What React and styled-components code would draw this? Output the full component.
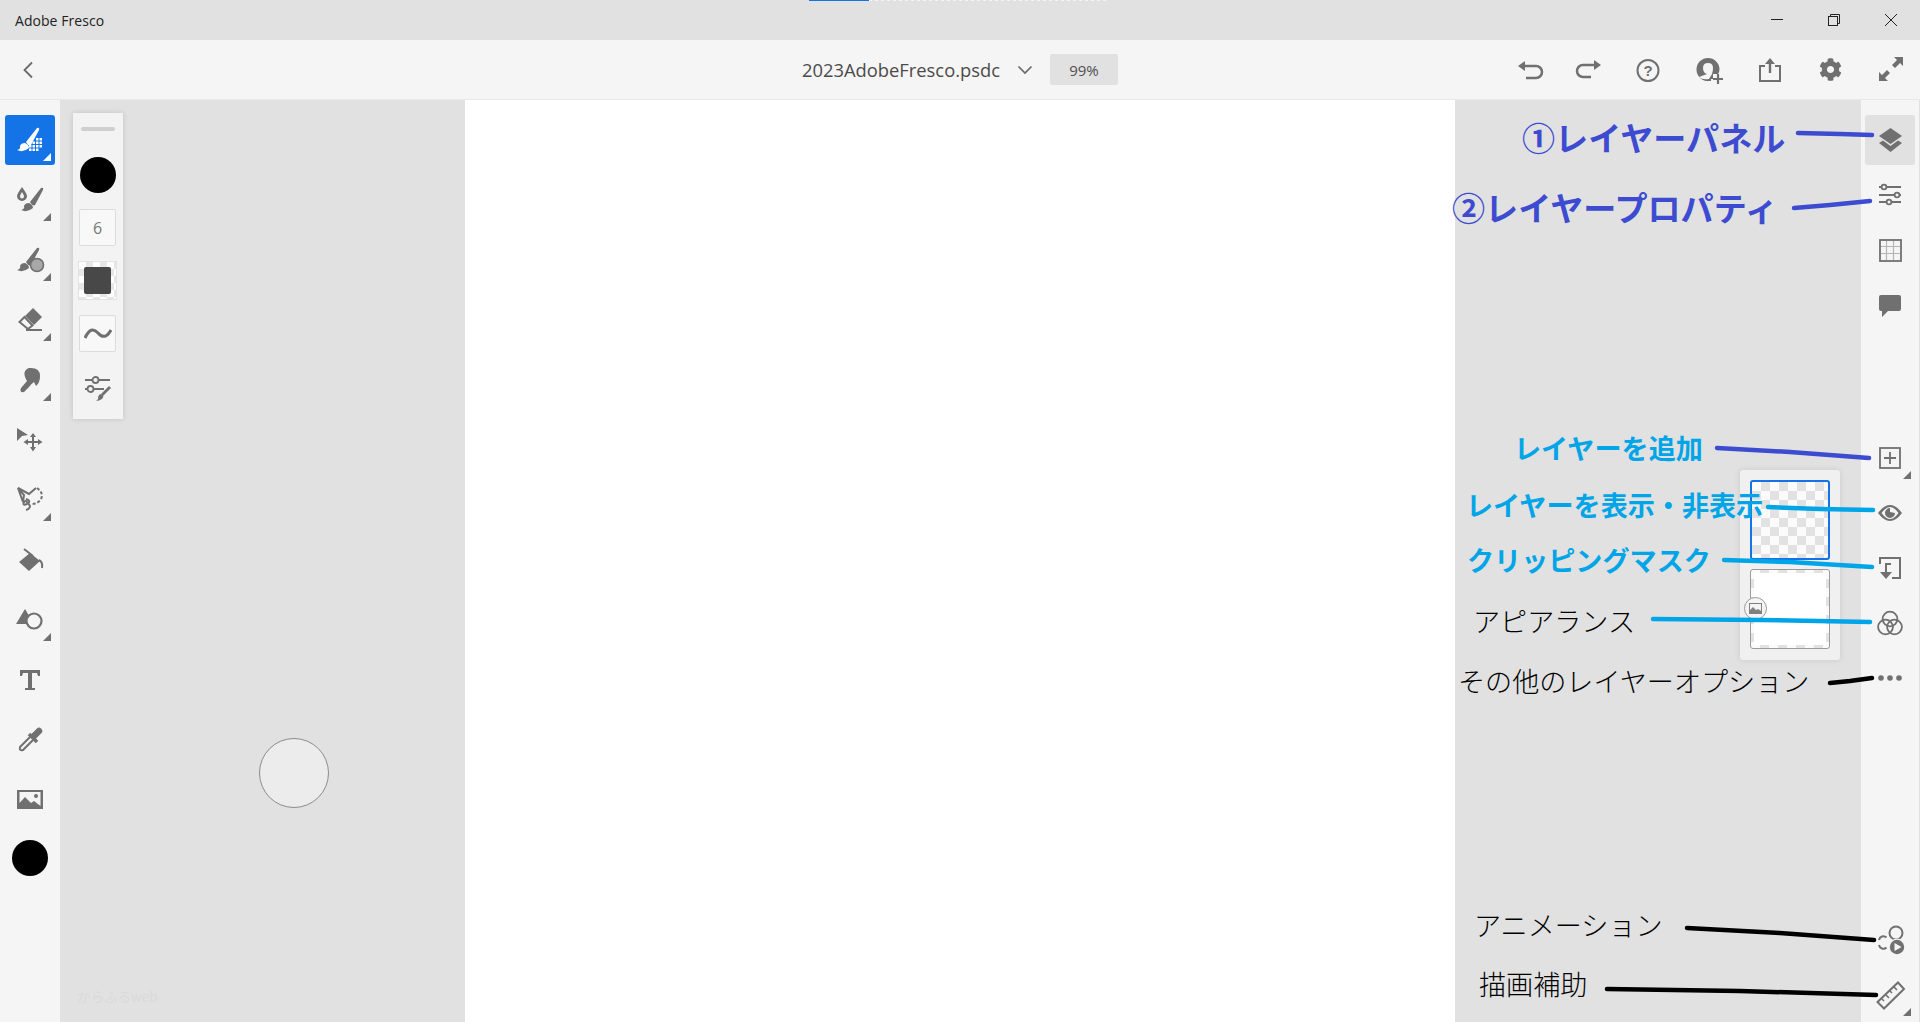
import React from "react";
import styled, { createGlobalStyle } from "styled-components";
import { FaCog } from "react-icons/fa";

const GREY = "#707070";
const INDIGO = "#3d4bd1";
const CYAN = "#00a5e8";

const Global = createGlobalStyle`
  html, body {
    margin: 0;
    padding: 0;
    overflow: hidden;
    background: #e1e1e1;
    font-family: "Open Sans", "Noto Sans", sans-serif;
  }
`;

const Page = styled.div`
  position: relative;
  display: flex;
  flex-direction: column;
  width: 1920px;
  height: 1022px;
  overflow: hidden;
`;

const TitleBar = styled.div`
  position: relative;
  display: flex;
  align-items: center;
  justify-content: space-between;
  height: 40px;
  flex: none;
  padding-left: 15px;
  background: #e1e1e1;
`;

const AppName = styled.span`
  font-size: 14px;
  letter-spacing: 0.05px;
  color: #222;
`;

const Progress = styled.div`
  position: absolute;
  top: 0;
  left: 809px;
  width: 299px;
  height: 1px;
  background:
    linear-gradient(#1473e6, #1473e6) 0 0 / 60px 1px no-repeat,
    repeating-linear-gradient(90deg, #f4f4f4 0 3px, transparent 3px 6px);
`;

const WindowButtons = styled.div`
  display: flex;
  margin-right: 1px;
`;

const WindowButton = styled.div`
  display: flex;
  align-items: center;
  justify-content: center;
  width: 57px;
  height: 40px;
`;

const TopBar = styled.div`
  position: relative;
  display: flex;
  align-items: center;
  justify-content: space-between;
  flex: none;
  box-sizing: border-box;
  height: 60px;
  background: #f5f5f5;
  border-bottom: 1px solid #e8e8e8;
`;

const BackButton = styled.div`
  display: flex;
  align-items: center;
  justify-content: center;
  width: 56px;
  height: 60px;
`;

const DocInfo = styled.div`
  display: flex;
  align-items: center;
  margin-left: 746px;
`;

const DocName = styled.span`
  font-size: 18.35px;
  color: #4b4b4b;
`;

const Chevron = styled.svg`
  margin: 0 17px 0 17px;
`;

const Zoom = styled.div`
  display: flex;
  align-items: center;
  justify-content: center;
  width: 68px;
  height: 31px;
  border-radius: 2px;
  background: #e1e1e1;
  color: #505050;
  font-size: 15px;
`;

const TopActions = styled.div`
  display: flex;
  margin-left: auto;
`;

const TopAction = styled.div`
  display: flex;
  align-items: center;
  justify-content: center;
  width: 60px;
  height: 60px;
  color: ${GREY};
`;

const Main = styled.div`
  display: flex;
  flex: 1;
  min-height: 0;
`;

const Rail = styled.div`
  display: flex;
  flex-direction: column;
  flex: none;
  box-sizing: border-box;
  width: 60px;
  padding: 15px 5px 0;
  gap: 10px;
  background: #f5f5f5;
`;

const RightRail = styled.div`
  display: flex;
  flex-direction: column;
  flex: none;
  box-sizing: border-box;
  width: 58px;
  margin-right: 1px;
  padding: 15px 4px 2px;
  background: #f5f5f5;
`;

const RailGroup = styled.div`
  display: flex;
  flex-direction: column;
  gap: 5px;
  margin-top: ${(p) => p.$top || "0"};
`;

const ToolButton = styled.div`
  position: relative;
  flex: none;
  width: 50px;
  height: 50px;
  border-radius: 3px;
  background: ${(p) => (p.$active ? "#1473e6" : p.$selected ? "#e1e1e1" : "transparent")};
  color: ${(p) => (p.$active ? "#fff" : GREY)};

  svg {
    display: block;
  }

  ${(p) =>
    p.$corner &&
    `&::after {
      content: "";
      position: absolute;
      right: 4px;
      bottom: 4px;
      width: 8px;
      height: 8px;
      background: currentColor;
      clip-path: polygon(100% 0, 100% 100%, 0 100%);
    }`}
`;

const ColorDot = styled.div`
  flex: none;
  width: 36px;
  height: 36px;
  margin: ${(p) => p.$margin || "0"};
  border-radius: 50%;
  background: #000;
`;

const Workspace = styled.div`
  position: relative;
  display: flex;
  flex: 1;
  background: #e1e1e1;
`;

const Gutter = styled.div`
  flex: none;
  width: 405px;
  box-sizing: border-box;
  padding: 13px 0 0 13px;
`;

const FloatPanel = styled.div`
  display: flex;
  flex-direction: column;
  align-items: center;
  box-sizing: border-box;
  width: 50px;
  height: 306px;
  padding: 14px 1px 0 0;
  background: #f3f3f3;
  box-shadow: 0 0 5px rgba(0, 0, 0, 0.14);
`;

const Handle = styled.div`
  width: 34px;
  height: 4px;
  border-radius: 2px;
  background: #cfcfcf;
  margin-bottom: 26px;
`;

const PanelBox = styled.div`
  display: flex;
  align-items: center;
  justify-content: center;
  box-sizing: border-box;
  width: 37px;
  height: 37px;
  margin-top: ${(p) => p.$top};
  border: 1px solid #dcdcdc;
  border-radius: 2px;
  background: #f8f8f8;
  color: #777;
  font-size: 16px;
`;

const OpacityBox = styled.div`
  display: flex;
  align-items: center;
  justify-content: center;
  box-sizing: border-box;
  width: 39px;
  height: 39px;
  margin-top: 15px;
  border: 1px solid #e2e2e2;
  background: repeating-conic-gradient(#e6e6e6 0 25%, #fdfdfd 0 50%) 0 0 / 14px 14px;
`;

const OpacityFill = styled.div`
  width: 27px;
  height: 27px;
  border-radius: 2px;
  background: #484848;
`;

const PanelIcon = styled.svg`
  margin-top: ${(p) => p.$top};
`;

const Canvas = styled.div`
  flex: none;
  width: 990px;
  background: #fff;
`;

const BrushCursor = styled.div`
  position: absolute;
  left: 199px;
  top: 638px;
  box-sizing: border-box;
  width: 70px;
  height: 70px;
  border: 1px solid #8c8c8c;
  border-radius: 50%;
  background: #ececec;
`;

const Watermark = styled.span`
  position: absolute;
  left: 17px;
  top: 886px;
  font-family: "Noto Sans CJK JP", "Noto Sans", sans-serif;
  font-size: 13.5px;
  color: #d9dadb;
`;

const LayerStack = styled.div`
  position: absolute;
  right: 0;
  top: 370px;
  display: flex;
  flex-direction: column;
  gap: 9px;
  box-sizing: border-box;
  width: 100px;
  height: 190px;
  margin-right: 21px;
  padding: 10px 10px;
  border-radius: 3px;
  background: #f0f0f0;
  box-shadow: 0 0 6px rgba(0, 0, 0, 0.1);
`;

const LayerThumb = styled.div`
  position: relative;
  box-sizing: border-box;
  width: 80px;
  height: 80px;
  border: ${(p) => (p.$current ? "2px solid #1473e6" : "1px solid #9a9a9a")};
  border-radius: 3px;
  background: repeating-conic-gradient(#e2e2e2 0 25%, #fbfbfb 0 50%) 0 0 / 18px 18px;
`;

const ThumbFill = styled.div`
  width: calc(100% - 6px);
  height: calc(100% - 6px);
  margin: 3px;
  background: #fff;
`;

const LayerBadge = styled.div`
  position: absolute;
  left: -7px;
  top: 27px;
  display: flex;
  align-items: center;
  justify-content: center;
  box-sizing: border-box;
  width: 23px;
  height: 23px;
  border: 1px solid #9a9a9a;
  border-radius: 50%;
  background: #f4f4f4;
`;

const Lines = styled.svg`
  position: absolute;
  left: 0;
  top: 0;
  pointer-events: none;
`;

const Note = styled.span`
  position: absolute;
  left: ${(p) => p.$x}px;
  top: ${(p) => p.$y}px;
  font-family: "Noto Sans CJK JP", "Noto Sans", sans-serif;
  font-size: ${(p) => p.$size || 27.1}px;
  font-weight: ${(p) => (p.$light ? 300 : 700)};
  line-height: 1;
  white-space: nowrap;
  color: ${(p) => p.$color};
`;

const Glyph = ({ children, size = 50 }) => (
  <svg width={size} height={size} viewBox={`0 0 ${size} ${size}`} fill="currentColor" stroke="none">
    {children}
  </svg>
);

const Stroke = (props) => <g fill="none" stroke="currentColor" strokeWidth="2.4" {...props} />;

const brushPath = "M21 27 L32 13 Q35 12 34 15 L26 30 Q24 32 21 27 Z M20 28 Q24 30 24 33 Q18 38 12 35 Q16 34 15 31 Q16 28 20 28 Z";

const PixelDots = () => {
  const dots = [];
  for (let r = 0; r < 4; r++) {
    for (let c = 0; c < 4; c++) {
      if (r + c >= 2 && !(r === 3 && c === 3)) {
        dots.push(<rect key={`${r}-${c}`} x={24 + c * 3.5} y={23 + r * 3.5} width="2.5" height="2.5" />);
      }
    }
  }
  return <g>{dots}</g>;
};

const leftTools = [
  {
    active: true,
    corner: true,
    icon: (
      <>
        <path d={brushPath} />
        <PixelDots />
      </>
    ),
  },
  {
    corner: true,
    icon: (
      <>
        <path d="M17 12 Q22 19 22 21 A5 5 0 0 1 12 21 Q12 19 17 12 Z M17 17 Q15 20 15 21.5 A2 2 0 0 0 19 21.5 Q19 20 17 17 Z" fillRule="evenodd" />
        <path transform="translate(4 0)" d={brushPath} />
      </>
    ),
  },
  {
    corner: true,
    icon: (
      <>
        <path d={brushPath} />
        <circle cx="32" cy="30" r="6.5" fill="#a8a8a8" stroke="currentColor" strokeWidth="1.6" />
      </>
    ),
  },
  {
    corner: true,
    icon: (
      <>
        <path d="M28 13 L37 22 L29 30 L20 21 Z" />
        <path d="M19.5 22 L27.5 30.5 L23 34 L14.5 27 Z" fill="none" stroke="currentColor" strokeWidth="2" />
        <rect x="21" y="34" width="16" height="2" />
      </>
    ),
  },
  {
    corner: true,
    icon: <path d="M24 13 Q35 12 35 21 Q35 28 31 31 L29 27 Q26 29 24 32 L19 37 Q14 38 16 33 L22 26 Q16 16 24 13 Z" />,
  },
  {
    icon: (
      <>
        <path d="M12 13 L23 20 L17 21 L12 26 Z" />
        <path d="M28 18 L31 22 H29 V26 H33 V24 L37.5 27 L33 30 V28 H29 V32 H31 L28 36.5 L25 32 H27 V28 H23 V30 L18.5 27 L23 24 V26 H27 V22 H25 Z" />
      </>
    ),
  },
  {
    corner: true,
    icon: (
      <>
        <Stroke strokeWidth="2">
          <path d="M13 13 L18 27 L19 20 Z" />
          <path d="M13 13 L24 19 L31 13" />
          <path d="M32 13 Q39 18 36 24 Q33 29 26 29" strokeDasharray="3 2" />
          <path d="M21 24 Q27 26 22 29 Q17 31 19 27 Q21 24 25 31 Q25 34 21 35" />
        </Stroke>
      </>
    ),
  },
  {
    icon: (
      <>
        <path d="M14 27 L25 18 L35 26 L24 36 Z" />
        <path d="M19 14 L28 21" fill="none" stroke="currentColor" strokeWidth="2" />
        <path d="M34 25 Q38 27 37 33" fill="none" stroke="currentColor" strokeWidth="2" />
      </>
    ),
  },
  {
    corner: true,
    icon: (
      <>
        <path d="M20 14 L29 29 H11 Z" />
        <circle cx="29" cy="26" r="7.5" fill="#f5f5f5" stroke="currentColor" strokeWidth="2.2" />
      </>
    ),
  },
  {
    icon: <path d="M15 15 H35 V21 H33 L32 18 H27 V33 H30 V35 H20 V33 H23 V18 H18 L17 21 H15 Z" />,
  },
  {
    icon: (
      <>
        <path d="M29 21 L34 16" fill="none" stroke="currentColor" strokeWidth="6.5" strokeLinecap="round" />
        <path d="M24 19 L32 27" fill="none" stroke="currentColor" strokeWidth="3.5" />
        <path d="M25 22 L15 32 Q14 36 18 35 L28 25" fill="none" stroke="currentColor" strokeWidth="2" />
      </>
    ),
  },
  {
    icon: (
      <>
        <path d="M12 15 H38 V34 H12 Z M14.5 17 V28 L20 22 L26 28 L29 26 L35.5 31 V17 Z" fillRule="evenodd" />
        <circle cx="31" cy="21" r="2" />
      </>
    ),
  },
];

const railTop = [
  {
    selected: true,
    icon: (
      <>
        <path d="M25.5 13 L37 21 L25.5 29 L14 21 Z" />
        <path d="M14 28 L18 25.5 L25.5 31 L33 25.5 L37 28 L25.5 37 Z" />
      </>
    ),
  },
  {
    icon: (
      <Stroke strokeWidth="1.8">
        <path d="M14 17 H17 M21 17 H36 M14 25 H29 M34 25 H36 M14 32 H21 M26 32 H36" />
        <circle cx="19" cy="17" r="2.4" />
        <circle cx="32" cy="25" r="2.4" />
        <circle cx="24" cy="32" r="2.4" />
      </Stroke>
    ),
  },
  {
    icon: (
      <>
        <path d="M21.5 15 V35 M28.5 15 V35 M15 21.5 H35 M15 28.5 H35" stroke="#b5b5b5" strokeWidth="1.2" fill="none" />
        <rect x="15" y="15" width="21" height="21" fill="none" stroke="currentColor" strokeWidth="1.8" />
      </>
    ),
  },
  {
    icon: <path d="M16 15 H34 Q36 15 36 17 V29 Q36 31 34 31 H23 L17 37 V31 H16 Q14 31 14 29 V17 Q14 15 16 15 Z" />,
  },
];

const railMiddle = [
  {
    corner: true,
    icon: (
      <Stroke strokeWidth="1.8">
        <rect x="15" y="15" width="20" height="20" />
        <path d="M25 19 V31 M19 25 H31" />
      </Stroke>
    ),
  },
  {
    icon: (
      <>
        <path d="M13 25 Q25 9 37 25 Q25 41 13 25 Z M16.5 25 Q25 37 33.5 25 Q25 13 16.5 25 Z" fillRule="evenodd" />
        <path d="M25 20 A5 5 0 1 0 30 25 L25 24 Z" />
      </>
    ),
  },
  {
    icon: (
      <>
        <Stroke strokeWidth="2">
          <path d="M15 21 V15 H35 V35 H27" />
          <path d="M26 21 H21 V31" />
        </Stroke>
        <path d="M15 29 H27 L21 36 Z" />
      </>
    ),
  },
  {
    icon: (
      <Stroke strokeWidth="1.8">
        <circle cx="25" cy="21" r="7.4" />
        <circle cx="20.5" cy="29" r="7.4" />
        <circle cx="29.5" cy="29" r="7.4" />
      </Stroke>
    ),
  },
  {
    icon: (
      <>
        <circle cx="16" cy="25" r="2.8" />
        <circle cx="25" cy="25" r="2.8" />
        <circle cx="34" cy="25" r="2.8" />
      </>
    ),
  },
];

const railBottom = [
  {
    icon: (
      <>
        <Stroke strokeWidth="2">
          <circle cx="31" cy="18" r="6.5" />
          <path d="M21.5 22.5 A4.5 4.5 0 0 0 14 25" />
          <path d="M14 30 A4.5 4.5 0 0 0 21.5 32.5" />
        </Stroke>
        <circle cx="32" cy="32" r="8.6" fill="#f5f5f5" />
        <circle cx="32" cy="32" r="7.2" />
        <path d="M29.5 28 V36 L36.5 32 Z" fill="#f5f5f5" />
      </>
    ),
  },
  {
    corner: true,
    icon: (
      <Stroke strokeWidth="2">
        <path d="M33 12.5 L39 19 L19 38.5 L12.5 32 Z" />
        <path d="M29 17 L32 20 M25 21 L27 23 M21 25 L24 28 M17 29 L19 31" strokeWidth="1.6" />
      </Stroke>
    ),
  },
];

const annotationLines = [
  { d: "M1798 133 L1840 134 L1872 135", c: INDIGO },
  { d: "M1794 208 L1830 205 L1870 201", c: INDIGO },
  { d: "M1717 448 L1790 452 L1869 458", c: INDIGO },
  { d: "M1768 507 L1820 509 L1873 510", c: CYAN },
  { d: "M1724 560 L1790 562 L1872 567", c: CYAN },
  { d: "M1653 619 L1760 620 L1870 622", c: CYAN },
  { d: "M1830 683 L1850 681 L1872 678", c: "#000" },
  { d: "M1687 928 L1780 933 L1874 940", c: "#000" },
  { d: "M1607 989 L1740 991 L1876 995", c: "#000" },
];

const notes = [
  { text: "①レイヤーパネル", x: 1522, y: 121, size: 33.1, color: INDIGO },
  { text: "②レイヤープロパティ", x: 1452, y: 191, size: 33.1, color: INDIGO },
  { text: "レイヤーを追加", x: 1514, y: 434, color: CYAN },
  { text: "レイヤーを表示・非表示", x: 1466, y: 491, color: CYAN },
  { text: "クリッピングマスク", x: 1467, y: 546, color: CYAN },
  { text: "アピアランス", x: 1473, y: 607, color: "#000", light: true },
  { text: "その他のレイヤーオプション", x: 1458, y: 667, color: "#000", light: true },
  { text: "アニメーション", x: 1474, y: 911, color: "#000", light: true },
  { text: "描画補助", x: 1479, y: 970, color: "#000", light: true },
];

const RailButtons = ({ items }) =>
  items.map((t, i) => (
    <ToolButton key={i} $active={t.active} $selected={t.selected} $corner={t.corner}>
      <Glyph>{t.icon}</Glyph>
    </ToolButton>
  ));

const App = () => (
  <Page>
    <Global />
    <TitleBar>
      <AppName>Adobe Fresco</AppName>
      <Progress />
      <WindowButtons>
        <WindowButton>
          <svg width="14" height="14" viewBox="0 0 14 14" fill="none" stroke="#222">
            <path d="M1 6.5 H13" />
          </svg>
        </WindowButton>
        <WindowButton>
          <svg width="14" height="14" viewBox="0 0 14 14" fill="none" stroke="#222">
            <rect x="1.5" y="3.5" width="9" height="9" />
            <path d="M3.5 3.5 V1.5 H12.5 V10.5 H10.5" />
          </svg>
        </WindowButton>
        <WindowButton>
          <svg width="14" height="14" viewBox="0 0 14 14" fill="none" stroke="#222">
            <path d="M1 1 L13 13 M13 1 L1 13" />
          </svg>
        </WindowButton>
      </WindowButtons>
    </TitleBar>

    <TopBar>
      <BackButton>
        <svg width="14" height="20" viewBox="0 0 14 20" fill="none" stroke="#6a6a6a" strokeWidth="1.8">
          <path d="M11 2.5 L3.5 10 L11 17.5" />
        </svg>
      </BackButton>
      <DocInfo>
        <DocName>2023AdobeFresco.psdc</DocName>
        <Chevron width="16" height="10" viewBox="0 0 16 10" fill="none" stroke="#6a6a6a" strokeWidth="1.7">
          <path d="M1.5 1.5 L8 8 L14.5 1.5" />
        </Chevron>
        <Zoom>99%</Zoom>
      </DocInfo>
      <TopActions>
        <TopAction>
          <Glyph size={30}>
            <path d="M3 11 L10 6 V16 Z" />
            <path d="M9 11 H21 A6 6 0 0 1 21 23 H11" fill="none" stroke="currentColor" strokeWidth="2.5" />
          </Glyph>
        </TopAction>
        <TopAction>
          <Glyph size={30}>
            <path d="M26 10 L19 5 V15 Z" />
            <path d="M20 10 H8 A6 6 0 0 0 8 22 H16" fill="none" stroke="currentColor" strokeWidth="2.5" />
          </Glyph>
        </TopAction>
        <TopAction>
          <Glyph size={30}>
            <circle cx="13" cy="15.5" r="10.5" fill="none" stroke="currentColor" strokeWidth="2" />
            <text x="13" y="21" textAnchor="middle" fontFamily="Liberation Sans, sans-serif" fontWeight="700" fontSize="15">
              ?
            </text>
          </Glyph>
        </TopAction>
        <TopAction>
          <Glyph size={30}>
            <path d="M13 3 A11.5 11.5 0 0 1 24.5 14 Q24.5 17 23 19 H18 V24 H16 V26 H13 A11.5 11.5 0 0 1 13 3 Z M13 8 Q8 8 8 13 Q8 18 12 19 L4 22 Q7 25 14 24 L17 19 Q18 16 18 13 Q18 8 13 8 Z" fillRule="evenodd" />
            <path d="M23 19 V29 M18 24 H28" fill="none" stroke="currentColor" strokeWidth="2.2" />
          </Glyph>
        </TopAction>
        <TopAction>
          <Glyph size={30}>
            <path d="M10 11 H5 V26 H25 V11 H20" fill="none" stroke="currentColor" strokeWidth="2" />
            <path d="M15 3 L20 9 H16.2 V18 H13.8 V9 H10 Z" />
          </Glyph>
        </TopAction>
        <TopAction>
          <FaCog size={23} />
        </TopAction>
        <TopAction>
          <Glyph size={30}>
            <path d="M28 2 V11 L25 8 L20 13 L17 10 L22 5 L19 2 Z" />
            <path d="M4 26 V17 L7 20 L12 15 L15 18 L10 23 L13 26 Z" />
          </Glyph>
        </TopAction>
      </TopActions>
    </TopBar>

    <Main>
      <Rail>
        <RailButtons items={leftTools} />
        <ColorDot $margin="5px 0 0 7px" />
      </Rail>

      <Workspace>
        <Gutter>
          <FloatPanel>
            <Handle />
            <ColorDot />
            <PanelBox $top="16px">6</PanelBox>
            <OpacityBox>
              <OpacityFill />
            </OpacityBox>
            <PanelBox $top="15px">
              <svg width="28" height="18" viewBox="0 0 28 18" fill="none" stroke="#707070" strokeWidth="3">
                <path d="M1 13 Q7 0 14 8 T27 5" />
              </svg>
            </PanelBox>
            <PanelIcon $top="24px" width="28" height="26" viewBox="0 0 28 26" fill="none" stroke="#707070" strokeWidth="1.8">
              <path d="M1 4 H8 M15 4 H26 M1 13 H3 M10 13 H20" />
              <circle cx="11.5" cy="4" r="3" />
              <circle cx="6.5" cy="13" r="3" />
              <path d="M26 11 L18 19" strokeWidth="2.8" />
              <path d="M17 18 Q21 20 18 23 Q15 25 12 25 Q15 23 14 21 Q15 18 17 18 Z" fill="#707070" stroke="none" />
            </PanelIcon>
          </FloatPanel>
        </Gutter>
        <Canvas />
        <BrushCursor />
        <Watermark>からふるweb</Watermark>
        <LayerStack>
          <LayerThumb $current />
          <LayerThumb>
            <ThumbFill />
            <LayerBadge>
              <svg width="13" height="11" viewBox="0 0 13 11">
                <path d="M0 0 H13 V11 H0 Z M1 1 V7 L4 4 L7 7 L9 6 L12 8 V1 Z" fill="#808080" fillRule="evenodd" />
              </svg>
            </LayerBadge>
          </LayerThumb>
        </LayerStack>
      </Workspace>

      <RightRail>
        <RailGroup>
          <RailButtons items={railTop} />
        </RailGroup>
        <RailGroup $top="103px">
          <RailButtons items={railMiddle} />
        </RailGroup>
        <RailGroup $top="auto">
          <RailButtons items={railBottom} />
        </RailGroup>
      </RightRail>
    </Main>

    <Lines width="1920" height="1022" viewBox="0 0 1920 1022" fill="none" strokeWidth="4.5" strokeLinecap="round">
      {annotationLines.map((l) => (
        <path key={l.d} d={l.d} stroke={l.c} />
      ))}
    </Lines>
    {notes.map((n) => (
      <Note key={n.text} $x={n.x} $y={n.y} $size={n.size} $color={n.color} $light={n.light}>
        {n.text}
      </Note>
    ))}
  </Page>
);

export default App;
